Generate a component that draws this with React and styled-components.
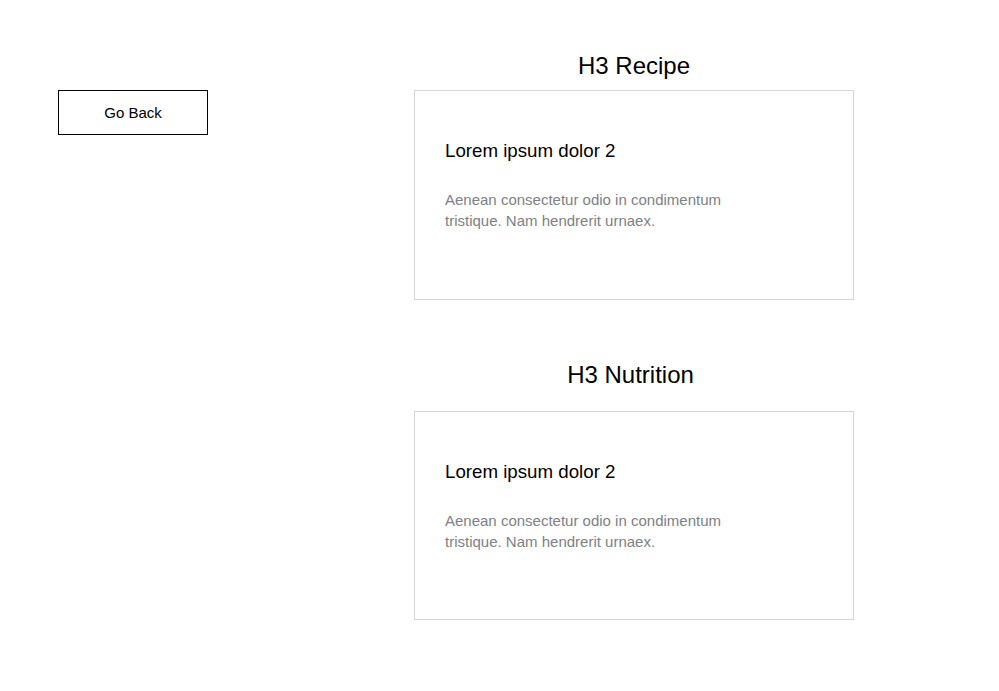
import React from "react";
import styled, { createGlobalStyle } from "styled-components";

const Global = createGlobalStyle`
  html, body { margin: 0; padding: 0; background: #fff; }
  body { font-family: "Liberation Sans", Arial, sans-serif; color: #000; }
  * { box-sizing: border-box; }
`;

const Page = styled.div`
  display: flex;
  align-items: flex-start;
  gap: 206px;
  padding: 52px 0 0 58px;
`;

const Sidebar = styled.aside`
  width: 150px;
  padding-top: 38px;
`;

const BackButton = styled.button`
  width: 150px;
  height: 45px;
  border: 1px solid #000;
  background: #fff;
  color: #000;
  font-family: "Liberation Sans", Arial, sans-serif;
  font-size: 15px;
  padding: 0;
  cursor: pointer;
`;

const Content = styled.main`
  width: 440px;
  display: flex;
  flex-direction: column;
`;

const Section = styled.section`
  display: flex;
  flex-direction: column;
  margin-top: ${(p) => p.$top}px;
`;

const SectionTitle = styled.h2`
  margin: 0 0 ${(p) => p.$gap}px;
  padding-right: ${(p) => p.$shift || 0}px;
  font-size: 24px;
  line-height: 28px;
  font-weight: 400;
  text-align: center;
`;

const Card = styled.div`
  height: ${(p) => p.$h}px;
  border: 1px solid #d6d6d6;
  padding: 0 30px;
`;

const CardTitle = styled.h3`
  margin: 49px 0 0;
  font-size: 18.72px;
  line-height: 22px;
  font-weight: 400;
`;

const CardText = styled.p`
  margin: 27px 0 0;
  width: 300px;
  font-size: 15px;
  line-height: 21px;
  color: #7e8185;
`;

const sections = [
  { title: "H3 Recipe", top: 0, gap: 10, h: 210, shift: 0 },
  { title: "H3 Nutrition", top: 61, gap: 22, h: 209, shift: 7 },
];

export default function App() {
  return (
    <>
      <Global />
      <Page>
        <Sidebar>
          <BackButton>Go Back</BackButton>
        </Sidebar>
        <Content>
          {sections.map((s) => (
            <Section key={s.title} $top={s.top}>
              <SectionTitle $gap={s.gap} $shift={s.shift}>{s.title}</SectionTitle>
              <Card $h={s.h}>
                <CardTitle>Lorem ipsum dolor 2</CardTitle>
                <CardText>
                  Aenean consectetur odio in condimentum tristique. Nam hendrerit urnaex.
                </CardText>
              </Card>
            </Section>
          ))}
        </Content>
      </Page>
    </>
  );
}
